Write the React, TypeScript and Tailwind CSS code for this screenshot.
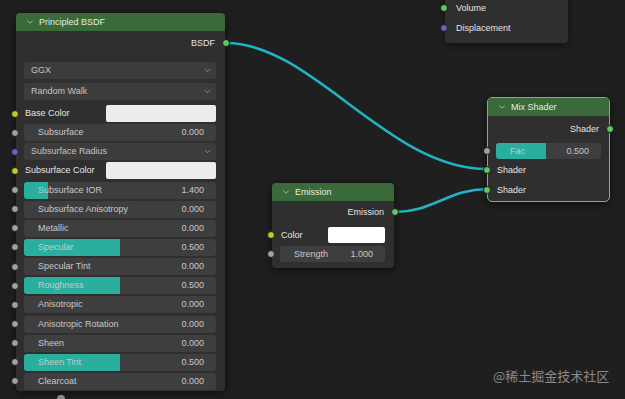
import { ChevronDown } from "lucide-react"

const SOCKET_COLORS = {
  gray: "bg-[#a1a1a1]",
  yellow: "bg-[#c7c729]",
  purple: "bg-[#6363c7]",
  green: "bg-[#63c763]",
}

type SocketColor = keyof typeof SOCKET_COLORS

// sockets sit on the node edge; rows inside the padded body need the bigger offset
function Socket({ color, side, edge = false }: { color: SocketColor; side: "l" | "r"; edge?: boolean }) {
  const pos = side === "r" ? "right-[-5px]" : edge ? "left-[-5px]" : "left-[-13px]"
  return (
    <span
      className={
        "absolute top-1/2 z-10 h-[8px] w-[8px] -translate-y-1/2 rounded-full border border-[#1c1c1c] " +
        SOCKET_COLORS[color] +
        " " +
        pos
      }
    />
  )
}

function Header({ title }: { title: string }) {
  return (
    <div className="flex h-[18px] items-center gap-[4px] rounded-t-[4px] bg-[#3a6a3a] pl-[9px] text-[#e2eee2]">
      <ChevronDown size={10} strokeWidth={1.6} className="text-[#c9dcc9]" />
      <span>{title}</span>
    </div>
  )
}

function Output({ label, className = "" }: { label: string; className?: string }) {
  return (
    <div className={"relative flex h-[16px] items-center justify-end pr-[10px] text-[#e4e4e4] " + className}>
      <span>{label}</span>
      <Socket color="green" side="r" />
    </div>
  )
}

function Field({
  label,
  value,
  fill = 0,
  socket = "gray",
  className = "",
}: {
  label: string
  value: string
  fill?: number
  socket?: SocketColor | null
  className?: string
}) {
  return (
    <div className={"relative flex items-center " + className}>
      {socket && <Socket color={socket} side="l" />}
      <div className="relative h-full flex-1 overflow-hidden rounded-[3px] bg-[#3e3e3e]">
        {fill > 0 && (
          <div className="absolute inset-y-0 left-0 bg-[#2aaf9f]" style={{ width: `${fill * 100}%` }} />
        )}
        <div className="relative flex h-full items-center justify-between pl-[14px] pr-[12px] text-[#c9c9c9]">
          <span>{label}</span>
          <span>{value}</span>
        </div>
      </div>
    </div>
  )
}

function Dropdown({
  label,
  socket = null,
  className = "",
}: {
  label: string
  socket?: SocketColor | null
  className?: string
}) {
  return (
    <div className={"relative flex items-center " + className}>
      {socket && <Socket color={socket} side="l" />}
      <div className="flex h-full flex-1 items-center justify-between rounded-[3px] bg-[#3c3c3c] pl-[7px] pr-[4px] text-[#c4c4c4]">
        <span>{label}</span>
        <ChevronDown size={9} strokeWidth={1.6} className="text-[#bdbdbd]" />
      </div>
    </div>
  )
}

function ColorRow({
  label,
  swatch,
  className = "",
}: {
  label: string
  swatch: string
  className?: string
}) {
  return (
    <div className={"relative flex items-center justify-between " + className}>
      <Socket color="yellow" side="l" />
      <span className="pl-[1px] text-[#e6e6e6]">{label}</span>
      <div className={"h-full rounded-[2px] " + swatch} />
    </div>
  )
}

function Input({ label, className = "" }: { label: string; className?: string }) {
  return (
    <div className={"relative flex h-[16px] items-center pl-[1px] text-[#e4e4e4] " + className}>
      <Socket color="green" side="l" />
      {label}
    </div>
  )
}

const principledRows = [
  { label: "Subsurface IOR", value: "1.400", fill: 0.125 },
  { label: "Subsurface Anisotropy", value: "0.000", fill: 0 },
  { label: "Metallic", value: "0.000", fill: 0 },
  { label: "Specular", value: "0.500", fill: 0.5 },
  { label: "Specular Tint", value: "0.000", fill: 0 },
  { label: "Roughness", value: "0.500", fill: 0.5 },
  { label: "Anisotropic", value: "0.000", fill: 0 },
  { label: "Anisotropic Rotation", value: "0.000", fill: 0 },
  { label: "Sheen", value: "0.000", fill: 0 },
  { label: "Sheen Tint", value: "0.500", fill: 0.5 },
  { label: "Clearcoat", value: "0.000", fill: 0 },
]

export default function App() {
  return (
    <div className="relative h-[399px] w-[625px] overflow-hidden bg-[#1f1f1f] font-['Liberation_Sans',sans-serif] text-[9px] leading-none">
      {/* wires */}
      <svg className="absolute inset-0" width={625} height={399} viewBox="0 0 625 399">
        <g fill="none" stroke="#22b4c4" strokeWidth={2.6} strokeLinecap="round">
          <path d="M226 43 C 312 43, 388 169, 487 169" />
          <path d="M395 212 C 432 212, 450 189, 487 189" />
        </g>
      </svg>

      {/* Material Output (partly off screen) */}
      <div className="absolute left-[445px] top-[-60px] h-[103px] w-[123px] rounded-[4px] bg-[#2f2f2f] shadow-[0_2px_8px_rgba(0,0,0,0.5)]">
        <div className="flex flex-col pt-[60px]">
          <div className="relative flex h-[16px] items-center pl-[11px] text-[#e4e4e4]">
            <Socket color="green" side="l" edge />
            Volume
          </div>
          <div className="relative mt-[4px] flex h-[16px] items-center pl-[11px] text-[#e4e4e4]">
            <Socket color="purple" side="l" edge />
            Displacement
          </div>
        </div>
      </div>

      {/* Principled BSDF */}
      <div className="absolute left-[16px] top-[13px] h-[378px] w-[209px] rounded-[4px] bg-[#2f2f2f] shadow-[0_2px_8px_rgba(0,0,0,0.6)]">
        <Header title="Principled BSDF" />
        <div className="flex flex-col pl-[8px] pr-[9px]">
          <Output label="BSDF" className="mr-[-9px] mt-[4px]" />
          <Dropdown label="GGX" className="mt-[11px] h-[17px]" />
          <Dropdown label="Random Walk" className="mt-[4px] h-[17px]" />
          <ColorRow label="Base Color" swatch="w-[110px] bg-[#ececec]" className="mt-[5px] h-[17px]" />
          <Field label="Subsurface" value="0.000" className="mt-[2.15px] h-[17px]" />
          <Dropdown label="Subsurface Radius" socket="purple" className="mt-[2.15px] h-[17px]" />
          <ColorRow label="Subsurface Color" swatch="w-[110px] bg-[#ececec]" className="mt-[2.15px] h-[17px]" />
          {principledRows.map((r) => (
            <Field key={r.label} label={r.label} value={r.value} fill={r.fill} className="mt-[2.15px] h-[17px]" />
          ))}
        </div>
      </div>

      {/* Emission */}
      <div className="absolute left-[272px] top-[183px] h-[85px] w-[122px] rounded-[4px] bg-[#2f2f2f] shadow-[0_2px_8px_rgba(0,0,0,0.6)]">
        <Header title="Emission" />
        <div className="flex flex-col pl-[8px] pr-[9px]">
          <Output label="Emission" className="mr-[-9px] mt-[3px]" />
          <ColorRow label="Color" swatch="w-[57px] bg-white" className="mt-[7px] h-[16px]" />
          <Field label="Strength" value="1.000" className="mt-[3px] h-[16px]" />
        </div>
      </div>

      {/* Mix Shader */}
      <div className="absolute left-[487px] top-[97px] h-[105px] w-[123px] rounded-[5px] border-[1.5px] border-[#50d050] bg-[#2f2f2f] shadow-[0_2px_8px_rgba(0,0,0,0.6)]">
        <Header title="Mix Shader" />
        <div className="flex flex-col pl-[8px] pr-[8px]">
          <Output label="Shader" className="mr-[-8px] mt-[5px]" />
          <Field label="Fac" value="0.500" fill={0.48} className="mt-[6px] h-[16px]" />
          <Input label="Shader" className="mt-[3px]" />
          <Input label="Shader" className="mt-[4px]" />
        </div>
      </div>

      {/* partly visible item at the bottom */}
      <span className="absolute left-[57px] top-[395px] h-[8px] w-[8px] rounded-full bg-[#8a8a8a]" />

      {/* watermark */}
      <div className="absolute left-[493px] top-[369px] font-['Noto_Sans_CJK_SC',sans-serif] text-[13px] text-[#8a8a8a]">
        @稀土掘金技术社区
      </div>
    </div>
  )
}
